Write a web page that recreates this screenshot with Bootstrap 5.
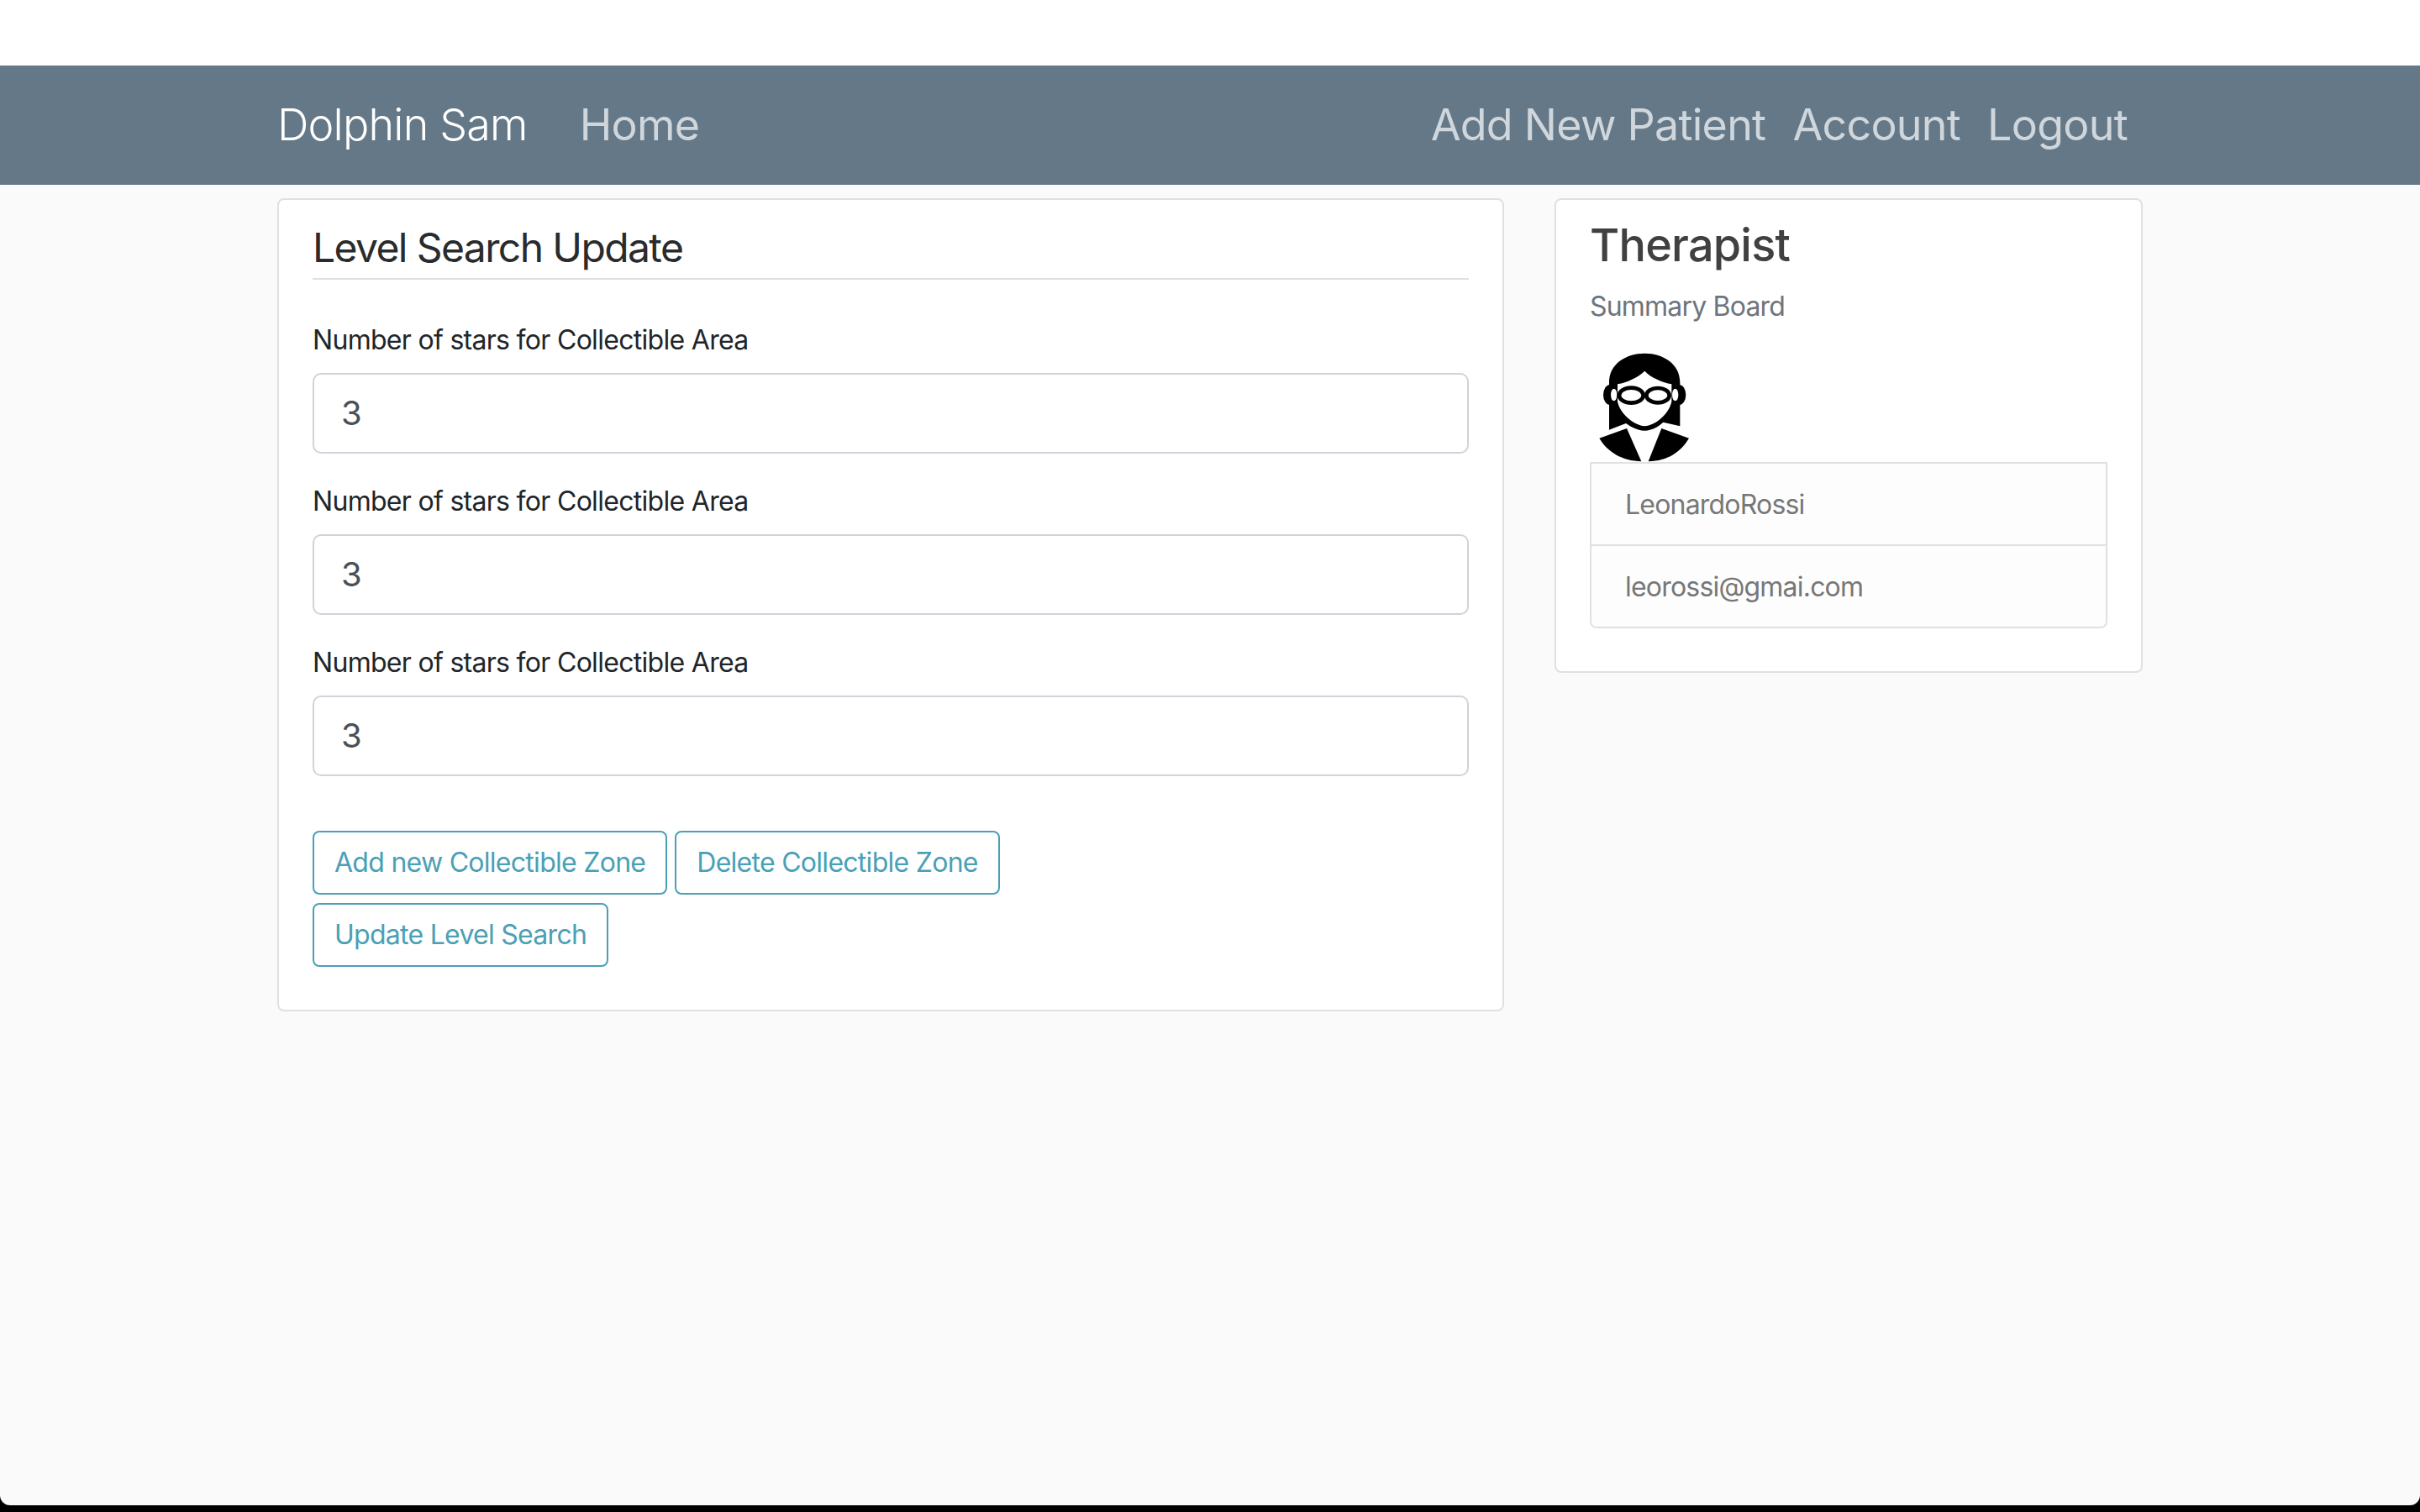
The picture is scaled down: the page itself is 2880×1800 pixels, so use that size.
<!DOCTYPE html>
<html lang="en">

<head>
  <meta charset="UTF-8">
  <meta name="viewport" content="width=device-width, initial-scale=1.0">
  <title>Dolphin Sam - Level Search Update</title>
  <link href="https://cdn.jsdelivr.net/npm/bootstrap@5.3.0/dist/css/bootstrap.min.css" rel="stylesheet">
  <style>
    html { font-size: 32px; }
    body { font-family: Inter, "Liberation Sans", sans-serif; background: #000; color: #212529; --bs-border-width: 2px; --bs-border-radius: 8px; letter-spacing: -.7px; }
    .screen { background: #fafafa; min-height: 1792px; border-radius: 0 0 12px 12px; padding-top: 78px; }
    .top-strip { background: #fff; height: 78px; margin-top: -78px; }
    .container { max-width: 2280px; --bs-gutter-x: 60px; }
    .page-row { --bs-gutter-x: 60px; }
    .app-bar { background: #657887; height: 142px; padding: 0; }
    .app-bar .navbar-brand { color: #fff; font-size: 52px; font-weight: 300; letter-spacing: -.8px; padding: 0; margin-right: 46px; }
    .app-bar .nav-link { color: #cfd6dc; font-size: 52px; font-weight: 400; letter-spacing: -.75px; padding: 0 18px; }
    .app-bar .nav-right { margin-right: 2px; }
    .panel { margin-top: 16px; background: #fff; border: 2px solid #e0e0e0; border-radius: 8px; }
    .panel-left { height: 968px; padding: 28px 40px 0; }
    .panel-right { height: 565px; padding: 21px 40px 0; }
    .panel-title { font-size: 48px; line-height: 57.6px; font-weight: 400; letter-spacing: -1.6px; color: #292b2c; border-bottom: 2px solid #e0e0e0; padding-bottom: 7px; margin-bottom: 48px; }
    .field-label { font-size: 32px; line-height: 48px; margin-bottom: 15px; display: block; color: #212529; }
    .field-input { height: 96px; font-size: 40px; padding: 0 32px; border: 2px solid #ced4da; border-radius: 10px; color: #495057; margin-bottom: 33px; }
    .btn-zone { font-size: 32px; line-height: 48px; letter-spacing: -.72px; padding: 12px 24px; border: 2px solid #4aa0b5; border-radius: 8px; color: #4aa0b5; background: #fff; }
    .btn-rows { margin-top: 65px; gap: 10px; }
    .btn-line { gap: 9px; }
    .therapist-name { font-size: 54px; line-height: 66px; font-weight: 500; letter-spacing: -.8px; color: #404040; margin-bottom: 0; }
    .therapist-sub { font-size: 32px; line-height: 48px; letter-spacing: -.8px; color: #6c757d; margin-top: 16px; margin-bottom: 29px; }
    .avatar { display: block; width: 132px; height: 132px; }
    .info-list { border-radius: 0 0 8px 8px; margin-top: 0; }
    .info-list .list-group-item { background: #fdfdfd; color: #777; font-size: 32px; line-height: 48px; letter-spacing: -.8px; padding: 25px 40px 23px; border: 2px solid #e0e0e0; }
    .info-list .list-group-item + .list-group-item { border-top: 0; }
  </style>
</head>

<body>
  <div class="screen">
    <div class="top-strip"></div>

    <nav class="navbar navbar-expand navbar-dark app-bar">
      <div class="container">
        <a class="navbar-brand" href="#">Dolphin Sam</a>
        <ul class="navbar-nav me-auto">
          <li class="nav-item"><a class="nav-link" href="#">Home</a></li>
        </ul>
        <ul class="navbar-nav nav-right">
          <li class="nav-item"><a class="nav-link" href="#">Add New Patient</a></li>
          <li class="nav-item"><a class="nav-link" href="#">Account</a></li>
          <li class="nav-item"><a class="nav-link" href="#">Logout</a></li>
        </ul>
      </div>
    </nav>

    <div class="container">
      <div class="row page-row">
        <!-- Formulario -->
        <div class="col-8">
          <div class="panel panel-left">
            <h4 class="panel-title">Level Search Update</h4>
            <form>
              <label class="field-label">Number of stars for Collectible Area</label>
              <input type="text" class="form-control field-input" value="3">
              <label class="field-label">Number of stars for Collectible Area</label>
              <input type="text" class="form-control field-input" value="3">
              <label class="field-label">Number of stars for Collectible Area</label>
              <input type="text" class="form-control field-input" value="3">
              <div class="btn-rows d-flex flex-column align-items-start">
                <div class="btn-line d-flex">
                  <button type="button" class="btn btn-zone">Add new Collectible Zone</button>
                  <button type="button" class="btn btn-zone">Delete Collectible Zone</button>
                </div>
                <button type="button" class="btn btn-zone">Update Level Search</button>
              </div>
            </form>
          </div>
        </div>

        <!-- Terapeuta -->
        <div class="col-4">
          <div class="panel panel-right">
            <h3 class="therapist-name">Therapist</h3>
            <p class="therapist-sub">Summary Board</p>
            <svg class="avatar" viewBox="36 54 396 396" aria-hidden="true">
              <path d="M105 335V165C105 100 165 62 232 62C298 62 358 100 358 165V322L298 308C275 330 250 338 232 338C212 338 190 330 165 312Z" fill="#000"/>
              <ellipse cx="108" cy="210" rx="24" ry="36" fill="#000"/>
              <ellipse cx="355" cy="210" rx="24" ry="36" fill="#000"/>
              <ellipse cx="122" cy="210" rx="11" ry="22" fill="#fff"/>
              <ellipse cx="341" cy="210" rx="11" ry="22" fill="#fff"/>
              <path d="M232 125C205 150 170 165 135 172V235C145 280 195 320 232 322C270 320 318 280 328 235V172C295 165 255 150 232 125Z" fill="#fff"/>
              <ellipse cx="184" cy="212" rx="43" ry="27" fill="#fff" stroke="#000" stroke-width="14"/>
              <ellipse cx="279" cy="212" rx="41" ry="26" fill="#fff" stroke="#000" stroke-width="14"/>
              <path d="M70 365L168 330L220 448C150 445 100 415 70 365Z" fill="#000"/>
              <path d="M390 365L292 330L245 448C315 445 360 415 390 365Z" fill="#000"/>
            </svg>
            <ul class="list-group info-list">
              <li class="list-group-item">LeonardoRossi</li>
              <li class="list-group-item">leorossi@gmai.com</li>
            </ul>
          </div>
        </div>
      </div>
    </div>
  </div>
</body>

</html>
